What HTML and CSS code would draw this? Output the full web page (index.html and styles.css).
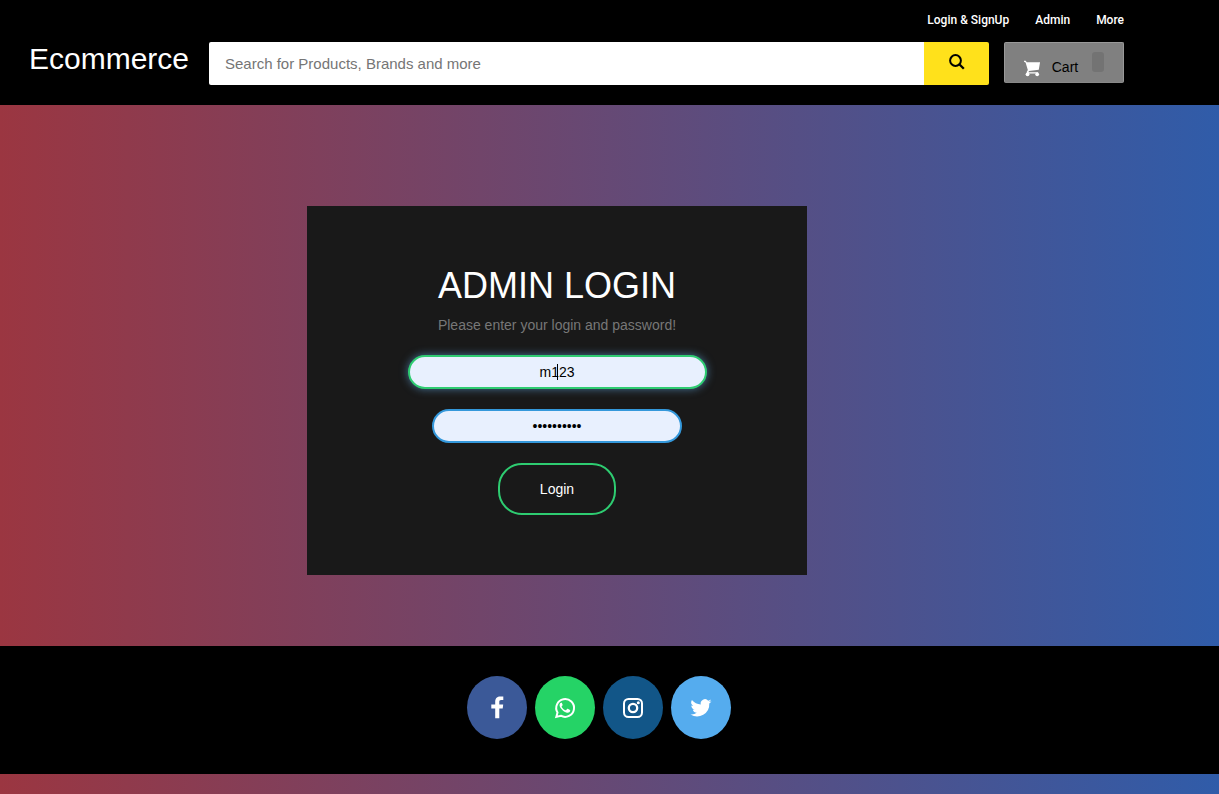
FILE: index.html
```html
<!DOCTYPE html>
<html lang="en">
<head>
<meta charset="utf-8">
<meta name="viewport" content="width=device-width, initial-scale=1">
<title>Ecommerce - Admin Login</title>
<link rel="stylesheet" href="styles.css">
</head>
<body>
<header class="header">
  <nav class="topnav">
    <a href="#">Login &amp; SignUp</a>
    <a href="#">Admin</a>
    <a href="#">More</a>
  </nav>
  <div class="bar">
    <a class="brand" href="#">Ecommerce</a>
    <form class="search" role="search">
      <input class="search-input" type="text" placeholder="Search for Products, Brands and more" aria-label="Search for products">
      <button class="search-button" type="button" aria-label="Search">
        <svg width="16" height="16" viewBox="0 0 16 16" fill="none" stroke="#000"><circle cx="6.500" cy="6.500" r="5.400" stroke-width="2"/><path d="M10.300 10.300L14.800 14.800" stroke-width="2.300"/></svg>
      </button>
    </form>
    <button class="cart" type="button">
      <svg width="17" height="17" viewBox="0 0 17 17" fill="#fff"><path d="M0 .5h1.700l1.100 1.700h13.500L15 9.800 5 11l-.4 1.200h9.800v1.300H3L2.700 12l1.200-2L1.600 2.400 0 1.700z"/><circle cx="3.600" cy="14.400" r="1.900"/><circle cx="13.400" cy="14.400" r="1.900"/></svg>
      <span>Cart</span>
      <span class="badge"></span>
    </button>
  </div>
</header>
<main class="main">
  <form class="card">
    <h1>ADMIN LOGIN</h1>
    <p>Please enter your login and password!</p>
    <div class="field">
      <input class="input input-active" type="text" value="m123" aria-label="Login">
      <span class="caret"></span>
    </div>
    <input class="input" type="password" value="abcdefghij" aria-label="Password">
    <button class="submit" type="button">Login</button>
  </form>
</main>
<footer class="footer">
  <a class="social facebook" href="#" aria-label="Facebook"><svg width="24" height="24" viewBox="0 0 24 24" fill="#fff"><path d="M18.300.6v3.500h-2.100c-1.600 0-1.900.8-1.900 1.900v2.500h3.900l-.5 4h-3.400v9.800h-4.100v-9.800H6.300v-4h3.900V5.600c0-3.400 2.100-5.200 5.100-5.200 1.400 0 2.600.1 3 .2z"/></svg></a>
  <a class="social whatsapp" href="#" aria-label="WhatsApp"><svg width="24" height="24" viewBox="0 0 24 24"><path d="M3.300 20.900l1.200-4.400a8.900 8.900 0 1 1 3.300 3.200z" fill="none" stroke="#fff" stroke-width="2"/><path fill="#fff" d="M8.600 6.800c-.5-.2-1 0-1.400.5-1.200 1.400-.6 3.300.4 4.700 1.600 2.300 3.500 4 6.300 4.700 1.700.4 3.100-.6 3.300-1.900.1-.5.100-.8-.2-.9l-2.200-1.100c-.3-.1-.5 0-.7.2l-.9 1.100c-.2.2-.4.300-.7.100-1.700-.7-2.900-1.800-3.800-3.300-.1-.3 0-.5.1-.6l.8-1c.1-.2.1-.4 0-.6l-.9-2.100z"/></svg></a>
  <a class="social instagram" href="#" aria-label="Instagram"><svg width="24" height="24" viewBox="0 0 24 24" fill="none" stroke="#fff" stroke-width="2"><rect x="3" y="3" width="18" height="18" rx="4.500"/><circle cx="12" cy="12" r="4.200" stroke-width="2.300"/><circle cx="17.300" cy="6.700" r="1.500" fill="#fff" stroke="none"/></svg></a>
  <a class="social twitter" href="#" aria-label="Twitter"><svg width="24" height="24" viewBox="0 0 24 24" fill="#fff"><path d="M22.500 5.300c-.8.300-1.600.6-2.500.7.900-.5 1.600-1.400 1.900-2.400-.8.500-1.800.9-2.700 1.100a4.300 4.300 0 0 0-7.400 3.900A12.200 12.200 0 0 1 2.900 4.100a4.300 4.300 0 0 0 1.300 5.800c-.7 0-1.400-.2-1.900-.5 0 2.100 1.500 3.800 3.400 4.300-.6.200-1.300.2-1.900.1.500 1.700 2.100 3 4 3A8.600 8.600 0 0 1 1.500 18.500 12.200 12.200 0 0 0 20.300 7.600c.9-.6 1.600-1.400 2.200-2.300z"/></svg></a>
</footer>
</body>
</html>
```
FILE: styles.css
```css
* { box-sizing: border-box; }

body {
  margin: 0;
  min-height: 100vh;
  font-family: "Liberation Sans", Arial, sans-serif;
  font-size: 14px;
  background: linear-gradient(to right, #9b3641, #305ca9);
}

a { color: #fff; text-decoration: none; }
button, input { font-family: inherit; margin: 0; }
svg { display: block; }

.header {
  padding: 12px 95px 20px 29px;
  background: #000;
}

.topnav {
  display: flex;
  justify-content: flex-end;
  gap: 26px;
  margin-bottom: 14px;
  font: 500 12px/16px Roboto, sans-serif;
}

.bar { display: flex; align-items: flex-start; }

.brand {
  width: 180px;
  font-size: 30px;
  line-height: 34px;
}

.search {
  display: flex;
  flex: 1;
  height: 43px;
  margin-right: 15px;
}

.search-input {
  flex: 1;
  min-width: 0;
  padding: 0 16px;
  border: 0;
  border-radius: 2px 0 0 2px;
  font-size: 15px;
  background: #fff;
}

.search-input::placeholder { color: #757575; }

.search-button {
  display: flex;
  justify-content: center;
  width: 65px;
  padding: 12px 0;
  border: 0;
  border-radius: 0 2px 2px 0;
  background: #ffe11b;
}

.cart {
  display: flex;
  align-items: flex-start;
  width: 120px;
  height: 41px;
  padding: 9px 19px;
  border: 1px solid #999;
  border-bottom-color: #888;
  border-radius: 2px;
  font-size: 14px;
  line-height: 16px;
  color: #000;
  background: #808080;
}

.cart svg { margin: 8px 11px 0 0; }
.cart span { margin-top: 7px; }

.cart .badge {
  width: 12px;
  height: 20px;
  margin: 0 0 0 14px;
  border-radius: 3px;
  background: #737373;
}

.main {
  display: flex;
  justify-content: center;
  padding: 101px 105px 71px 0;
}

.card {
  display: flex;
  flex-direction: column;
  align-items: center;
  width: 500px;
  padding: 60px 40px;
  background: #191919;
}

.card h1 {
  margin: 0 0 10px;
  font-size: 36px;
  font-weight: 400;
  line-height: 40px;
  color: #fff;
}

.card p {
  margin: 0 0 20px;
  line-height: 19px;
  color: #777;
}

.field { position: relative; margin-bottom: 20px; }

.input {
  display: block;
  width: 250px;
  height: 34px;
  padding: 0 10px;
  border: 2px solid #3498db;
  border-radius: 24px;
  outline: 0;
  font-size: 14px;
  text-align: center;
  color: #000;
  background: #e8f0fe;
}

.input-active {
  width: 299px;
  border-color: #2ecc71;
  box-shadow: 0 0 8px rgba(102, 175, 233, 0.6);
}

.caret {
  position: absolute;
  top: 9px;
  left: 50%;
  width: 1px;
  height: 16px;
  background: #000;
}

.submit {
  margin-top: 20px;
  padding: 14px 40px;
  border: 2px solid #2ecc71;
  border-radius: 24px;
  font-size: 14px;
  line-height: 20px;
  color: #fff;
  background: none;
}

.footer {
  display: flex;
  justify-content: center;
  gap: 8px;
  padding: 30px 21px 35px 0;
  background: #000;
}

.social {
  display: flex;
  align-items: center;
  justify-content: center;
  width: 60px;
  height: 63px;
  border-radius: 50%;
}

.facebook { background: #3b5998; }
.whatsapp { background: #25d366; }
.instagram { background: #125688; }
.twitter { background: #55acee; }
```
